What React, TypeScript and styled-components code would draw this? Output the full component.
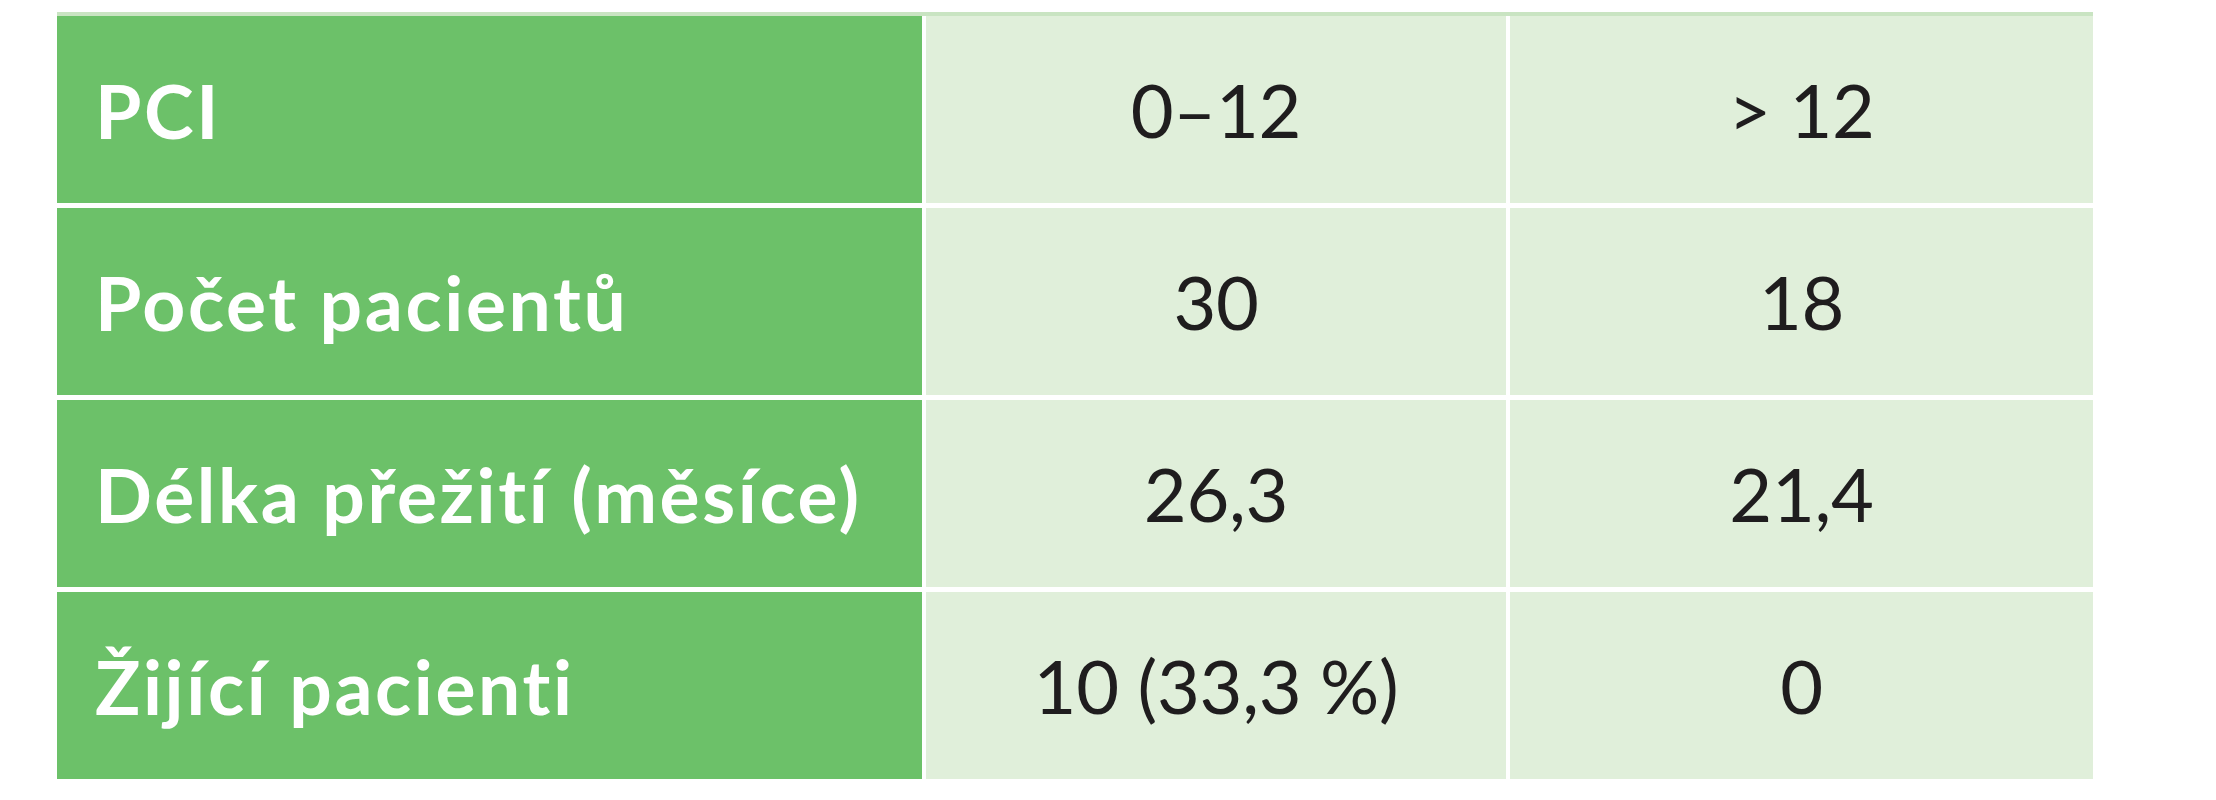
import React from "react";
import styled, { createGlobalStyle } from "styled-components";

const Global = createGlobalStyle`
  html, body { margin: 0; padding: 0; background: #ffffff; }
  body { font-family: Lato, "Open Sans", sans-serif; }
`;

const Page = styled.div`
  padding: 12px 0 0 57px;
`;

const Table = styled.div`
  display: grid;
  grid-template-columns: 865px 580px 583px;
  grid-auto-rows: 187px;
  column-gap: 4px;
  row-gap: 5px;
  width: max-content;
  border-top: 4px solid #c9e4c2;
`;

const Label = styled.div`
  background: #6cc169;
  color: #ffffff;
  font-family: Lato, "Open Sans", sans-serif;
  font-weight: 700;
  font-size: 75px;
  display: flex;
  align-items: center;
  padding-left: 38px;
  letter-spacing: 2.6px;
  white-space: nowrap;
`;

const Value = styled.div`
  background: #e0efda;
  color: #1f1d1e;
  font-family: Lato, "Open Sans", sans-serif;
  font-weight: 400;
  font-size: 74px;
  display: flex;
  align-items: center;
  justify-content: center;
  white-space: nowrap;
  letter-spacing: -0.3px;
`;

const rows: [string, string, string][] = [
  ["PCI", "0–12", "> 12"],
  ["Počet pacientů", "30", "18"],
  ["Délka přežití (měsíce)", "26,3", "21,4"],
  ["Žijící pacienti", "10 (33,3 %)", "0"],
];

export default function App() {
  return (
    <>
      <Global />
      <Page>
        <Table>
          {rows.map((r) => (
            <React.Fragment key={r[0]}>
              <Label>{r[0]}</Label>
              <Value>{r[1]}</Value>
              <Value>{r[2]}</Value>
            </React.Fragment>
          ))}
        </Table>
      </Page>
    </>
  );
}
